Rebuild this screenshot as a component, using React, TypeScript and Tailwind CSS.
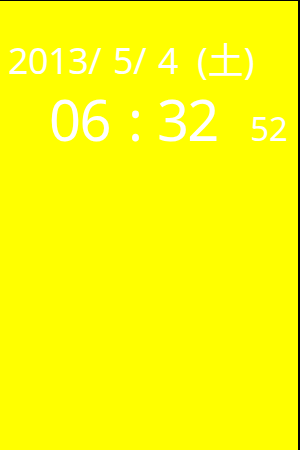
export default function App() {
  return (
    <div className="w-[300px] h-[450px] bg-[#ffff00] border-t border-r-2 border-black text-white font-['Noto_Sans','Noto_Sans_CJK_JP',sans-serif]">
      <div className="pt-[42px] pl-[8px] flex items-baseline text-[36px] leading-none whitespace-pre">
        <span className="tracking-[-0.5px] [word-spacing:3px]">2013/ 5/ 4</span>
        <span className="ml-[19px]">(土)</span>
      </div>
      <div className="mt-[12px] pl-[49px] flex items-baseline whitespace-pre text-[56px] leading-none">
        <span className="tracking-[-1.5px]">06</span>
        <span className="ml-[18px]">:</span>
        <span className="ml-[14px] tracking-[-2px]">32</span>
        <span className="ml-[33px] text-[33px]">52</span>
      </div>
    </div>
  );
}
